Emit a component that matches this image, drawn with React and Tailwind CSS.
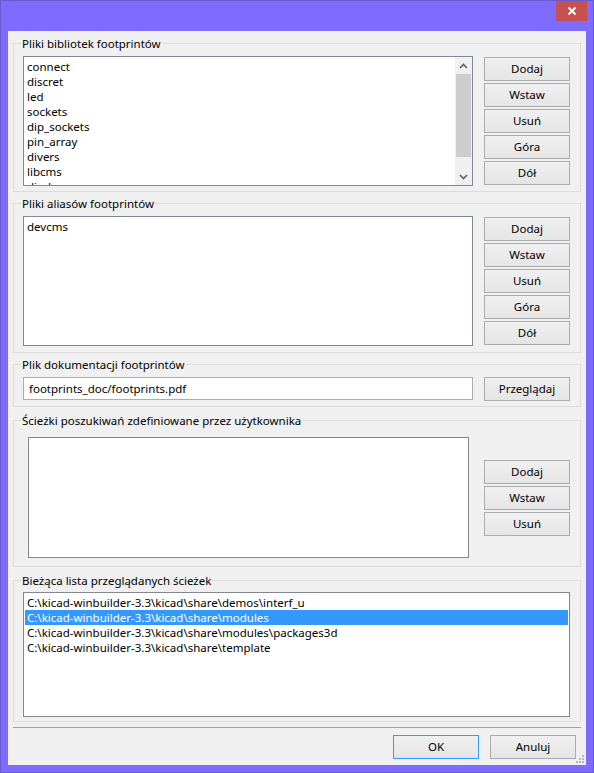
import React from "react";

const FONT = { fontFamily: '"Noto Sans", "Open Sans", sans-serif' };

const libs = ["connect", "discret", "led", "sockets", "dip_sockets", "pin_array", "divers", "libcms", "diodes"];
const paths = [
  "C:\\kicad-winbuilder-3.3\\kicad\\share\\demos\\interf_u",
  "C:\\kicad-winbuilder-3.3\\kicad\\share\\modules",
  "C:\\kicad-winbuilder-3.3\\kicad\\share\\modules\\packages3d",
  "C:\\kicad-winbuilder-3.3\\kicad\\share\\template",
];

function Btn({ children, primary }) {
  return (
    <button
      className={
        "w-[86px] h-[24px] shrink-0 flex items-center justify-center text-[11.5px] text-black bg-gradient-to-b from-[#f0f0f0] to-[#e5e5e5] border " +
        (primary ? "border-[#3399ff]" : "border-[#acacac]")
      }
    >
      {children}
    </button>
  );
}

function Group({ title, className, children }) {
  return (
    <fieldset className={"border border-[#dcdcdc] pl-[9px] pr-[10px] min-w-0 " + className}>
      <legend className="-ml-[2px] px-[1px] h-[15px] leading-[15px] text-[11.5px] text-black">{title}</legend>
      {children}
    </fieldset>
  );
}

function ButtonStack({ labels }) {
  return (
    <div className="flex flex-col gap-[2px]">
      {labels.map((l) => (
        <Btn key={l}>{l}</Btn>
      ))}
    </div>
  );
}

function Chevron({ up }) {
  return (
    <svg width="9" height="6" viewBox="0 0 9 6">
      <polyline
        points={up ? "1,5 4.5,1.5 8,5" : "1,1 4.5,4.5 8,1"}
        fill="none"
        stroke="#606060"
        strokeWidth="1.6"
      />
    </svg>
  );
}

export default function App() {
  return (
    <div className="w-[594px] h-[773px] bg-[#7f6bff] border border-[#6a5ad0] flex flex-col text-[11.5px] text-black" style={FONT}>
      <div className="h-[30px] flex justify-end items-start pr-[6px] shrink-0">
        <div className="w-[31px] h-[20px] bg-[#c75050] flex items-center justify-center">
          <svg width="10" height="10" viewBox="0 0 10 10">
            <path d="M1.5 1.5 L8.5 8.5 M8.5 1.5 L1.5 8.5" stroke="#fff" strokeWidth="2" />
          </svg>
        </div>
      </div>

      <div className="flex-1 mx-[7px] mb-[7px] bg-[#f0f0f0] flex flex-col px-[5px] relative">
        <Group title="Pliki bibliotek footprintów" className="mt-[5px] pt-[5px] pb-[5px]">
          <div className="flex gap-[11px] items-start">
            <div className="w-[450px] h-[130px] bg-white border border-[#828790] flex overflow-hidden">
              <div className="flex-1 pt-[2px] pl-[3px] leading-[15px] overflow-hidden">
                {libs.map((l) => (
                  <div key={l} className="h-[15px]">{l}</div>
                ))}
              </div>
              <div className="w-[17px] bg-[#f0f0f0] flex flex-col">
                <div className="h-[17px] flex items-center justify-center">
                  <Chevron up />
                </div>
                <div className="h-[83px] bg-[#cdcdcd] mx-[1px]" />
                <div className="flex-1" />
                <div className="h-[17px] flex items-center justify-center">
                  <Chevron />
                </div>
              </div>
            </div>
            <div className="mt-[1px]">
              <ButtonStack labels={["Dodaj", "Wstaw", "Usuń", "Góra", "Dół"]} />
            </div>
          </div>
        </Group>

        <Group title="Pliki aliasów footprintów" className="mt-[4px] pt-[5px] pb-[6px]">
          <div className="flex gap-[11px] items-start">
            <div className="w-[450px] h-[130px] bg-white border border-[#828790] pt-[2px] pl-[3px] leading-[15px]">
              devcms
            </div>
            <div className="mt-[1px]">
              <ButtonStack labels={["Dodaj", "Wstaw", "Usuń", "Góra", "Dół"]} />
            </div>
          </div>
        </Group>

        <Group title="Plik dokumentacji footprintów" className="mt-[4px] pt-[5px] pb-[5px]">
          <div className="flex gap-[11px] items-start">
            <div className="w-[450px] h-[23px] bg-white border border-[#abadb3] flex items-center pl-[5px]">
              footprints_doc/footprints.pdf
            </div>
            <Btn>Przeglądaj</Btn>
          </div>
        </Group>

        <Group title="Ścieżki poszukiwań zdefiniowane przez użytkownika" className="mt-[6px] pt-[9px] pb-[8px]">
          <div className="flex gap-[15px] items-center">
            <div className="ml-[5px] w-[441px] h-[121px] bg-white border border-[#828790]" />
            <ButtonStack labels={["Dodaj", "Wstaw", "Usuń"]} />
          </div>
        </Group>

        <Group title="Bieżąca lista przeglądanych ścieżek" className="mt-[6px] pt-[4px] pb-[4px]">
          <div className="h-[125px] bg-white border border-[#828790] pt-[2px] px-[1px] leading-[15px]">
            {paths.map((p, i) => (
              <div key={p} className={"h-[15px] pl-[2px] " + (i === 1 ? "bg-[#3399ff] text-white" : "")}>
                {p}
              </div>
            ))}
          </div>
        </Group>

        <div className="mt-[5px] h-px bg-[#a0a0a0]" />

        <div className="mt-[7px] flex justify-end gap-[11px] pr-[5px]">
          <Btn primary>OK</Btn>
          <Btn>Anuluj</Btn>
        </div>

        <svg className="absolute right-[1px] bottom-[1px]" width="10" height="10" viewBox="0 0 10 10">
          {[[7, 1], [7, 4], [4, 4], [7, 7], [4, 7], [1, 7]].map(([x, y], i) => (
            <rect key={i} x={x} y={y} width="2" height="2" fill="#b8b8b8" />
          ))}
        </svg>
      </div>
    </div>
  );
}
